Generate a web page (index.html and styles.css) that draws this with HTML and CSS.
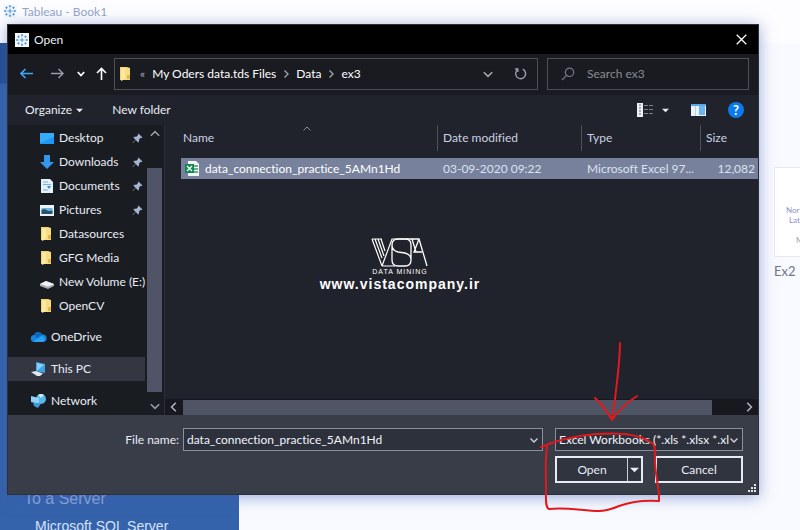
FILE: index.html
```
<!DOCTYPE html>
<html lang="en">
<head>
<meta charset="UTF-8">
<meta name="viewport" content="width=device-width, initial-scale=1">
<title>Tableau - Book1</title>
<link rel="stylesheet" href="styles.css">
</head>

<body>

<svg class="defs" aria-hidden="true">
  <symbol id="tableau" viewBox="0 0 14 14">
    <rect width="14" height="14" fill="#f4f9ff"/>
    <path d="M7 4.500v5M4.500 7h5M7 1v2.500M5.800 2.200h2.400M7 10.500V13M5.800 11.800h2.400M1 7h2.500M2.200 5.800v2.400M10.500 7H13M11.800 5.800v2.400M3.500 2.500v2.400M2.300 3.700h2.400M10.500 2.500v2.400M9.300 3.700h2.400M3.500 9.200v2.400M2.300 10.400h2.400M10.500 9.200v2.400M9.300 10.400h2.400" stroke="#4a90cf" stroke-width="0.9" fill="none"/>
  </symbol>
  <symbol id="folder" viewBox="0 0 14 16">
    <path d="M1 1h7l3 1v12H1z" fill="#f5d573"/>
    <path d="M2 3l4-1v11l-4 2z" fill="#ffe9a0"/>
    <path d="M6 2h5v12H6z" fill="#f8dc82"/>
    <path d="M8 9h3v4H8z" fill="#e3b94f"/>
  </symbol>
  <symbol id="pin" viewBox="0 0 12 12">
    <path d="M7 .5L11.500 5l-1.300.5-.6-.2-2 2 .1 2-1 1-2.600-2.600L1 11l-.4-.4 3.200-3.200L1.500 5l1-1 2.200.2 2-2L6.400 1.500z" fill="#a3b4d3"/>
  </symbol>
  <symbol id="down" viewBox="0 0 10 10">
    <path d="M1.500 3.500L5 7l3.500-3.500" fill="none" stroke="currentColor" stroke-width="1.300"/>
  </symbol>
  <symbol id="right" viewBox="0 0 10 10">
    <path d="M3.500 1.500L7 5 3.500 8.500" fill="none" stroke="currentColor" stroke-width="1.300"/>
  </symbol>
  <symbol id="caret" viewBox="0 0 8 5">
    <path d="M0 .5h8L4 4.500z" fill="currentColor"/>
  </symbol>
</svg>

<!-- application behind the dialog -->
<div class="app">
  <header class="app-title">
    <svg class="app-icon"><use href="#tableau"/></svg>
    <span>Tableau - Book1</span>
  </header>
  <div class="app-body">
    <aside class="connect">
      <h2>To a Server</h2>
      <a href="#">Microsoft SQL Server</a>
    </aside>
    <main class="recent">
      <figure class="book">
        <div class="thumb">
          <p>Nor</p>
          <p class="thumb-lat">Lat</p>
          <p class="thumb-m">M</p>
        </div>
        <figcaption>Ex2</figcaption>
      </figure>
    </main>
  </div>
</div>

<div class="dialog" role="dialog" aria-label="Open">

  <div class="titlebar">
    <svg class="app-icon"><use href="#tableau"/></svg>
    <span>Open</span>
    <button class="close" aria-label="Close">
      <svg width="11" height="11" viewBox="0 0 11 11"><path d="M.7.700l9.600 9.600M10.300.700L.7 10.300" stroke="#fff" stroke-width="1.300"/></svg>
    </button>
  </div>

  <div class="navbar">
    <div class="nav-buttons">
      <button class="back" aria-label="Back"><svg width="13" height="11" viewBox="0 0 13 11"><path d="M13 5.500H1M5.500 1L1 5.500 5.500 10" fill="none" stroke="#42a5f5" stroke-width="1.600"/></svg></button>
      <button class="forward" aria-label="Forward"><svg width="13" height="11" viewBox="0 0 13 11"><path d="M0 5.500h12M7.500 1L12 5.500 7.500 10" fill="none" stroke="#9a9da5" stroke-width="1.400"/></svg></button>
      <button class="history" aria-label="Recent locations"><svg width="8" height="6" viewBox="0 0 8 6"><path d="M.8 1L4 4.500 7.200 1" fill="none" stroke="#fff" stroke-width="1.700"/></svg></button>
      <button aria-label="Up"><svg width="11" height="13" viewBox="0 0 11 13"><path d="M5.500 13V1.500M1 6l4.500-4.500L10 6" fill="none" stroke="#fff" stroke-width="1.600"/></svg></button>
    </div>
    <div class="address">
      <svg class="folder"><use href="#folder"/></svg>
      <span class="more">«</span>
      <a href="#">My Oders data.tds Files</a>
      <svg class="sep"><use href="#right"/></svg>
      <a href="#">Data</a>
      <svg class="sep"><use href="#right"/></svg>
      <a href="#">ex3</a>
      <button class="drop" aria-label="Previous locations"><svg width="12" height="12"><use href="#down"/></svg></button>
      <button class="refresh" aria-label="Refresh"><svg width="13" height="13" viewBox="0 0 13 13"><path d="M8.800 2.200a5 5 0 1 1-4.900.3M3.800 5V2H1" fill="none" stroke="#9b9ea6" stroke-width="1.400"/></svg></button>
    </div>
    <label class="search">
      <svg width="14" height="14" viewBox="0 0 14 14"><circle cx="8.500" cy="5.300" r="4.200" fill="none" stroke="#777a83" stroke-width="1.200"/><path d="M5.500 8.300L1 13" stroke="#777a83" stroke-width="1.200"/></svg>
      <input type="search" placeholder="Search ex3" aria-label="Search ex3">
    </label>
  </div>

  <div class="toolbar">
    <button class="organize">Organize <svg width="7" height="5"><use href="#caret"/></svg></button>
    <button>New folder</button>
    <div class="tools">
      <button aria-label="View">
        <svg width="16" height="14" viewBox="0 0 16 14"><path d="M0 0h6v14H0z" fill="#eef1f6"/><path d="M2 2h2M2 5h2M2 8h2M2 11h2" stroke="#5a6270"/><path d="M7 2.500h4M12 2.500h4M7 6.500h4M12 6.500h4M7 10.500h4M12 10.500h4" stroke="#7c818b"/></svg>
      </button>
      <button aria-label="More views"><svg width="7" height="5"><use href="#caret"/></svg></button>
      <button class="preview" aria-label="Preview pane">
        <svg width="15" height="12" viewBox="0 0 15 12"><path d="M0 0h15v12H0z" fill="#e9f3fc"/><path d="M8 2h6v9H8z" fill="#6bb4f1"/><path d="M0 0h15v2H0z" fill="#58a8e8"/><path d="M4.500 2v10" stroke="#b9cfe3"/></svg>
      </button>
      <button class="help" aria-label="Help">?</button>
    </div>
  </div>

  <div class="content">
    <nav class="tree">
      <ul class="places">
        <li><a href="#"><svg width="14" height="11" viewBox="0 0 14 11"><path d="M0 0h14v11H0z" fill="#2196f3"/><path d="M0 0h14v4L0 10z" fill="#35adfb"/></svg>Desktop<svg class="pin"><use href="#pin"/></svg></a></li>
        <li><a href="#"><svg width="14" height="14" viewBox="0 0 14 14"><path d="M4 0h6v7h4l-7 7-7-7h4z" fill="#3397ee"/></svg>Downloads<svg class="pin"><use href="#pin"/></svg></a></li>
        <li><a href="#"><svg width="14" height="14" viewBox="0 0 14 14"><path d="M1 0h9l3 3v11H1z" fill="#e4f1fb"/><path d="M3 3h5M3 5.500h8M3 11h5" stroke="#74b4e4"/><path d="M7 7l4 0-2 3z" fill="#3c86c4"/></svg>Documents<svg class="pin"><use href="#pin"/></svg></a></li>
        <li><a href="#"><svg width="14" height="11" viewBox="0 0 14 11"><path d="M0 0h14v11H0z" fill="#eaf4fb"/><path d="M1.500 3h11v5h-11z" fill="#70b7e0"/><path d="M1.500 5l3-1 4 2 4-.5V9h-11z" fill="#2b526e"/></svg>Pictures<svg class="pin"><use href="#pin"/></svg></a></li>
        <li><a href="#"><svg width="14" height="16"><use href="#folder"/></svg>Datasources</a></li>
        <li><a href="#"><svg width="14" height="16"><use href="#folder"/></svg>GFG Media</a></li>
        <li><a href="#"><svg width="14" height="14" viewBox="0 0 14 14"><path d="M0 9l6-3 8 3v2l-6 3-8-3z" fill="#a9abb1"/><path d="M0 9l6-3 8 3-6 2.500z" fill="#f3f3f6"/></svg>New Volume (E:)</a></li>
        <li><a href="#"><svg width="14" height="16"><use href="#folder"/></svg>OpenCV</a></li>
      </ul>
      <ul class="places roots">
        <li><a href="#"><svg width="16" height="12" viewBox="0 0 16 12"><path d="M3.500 11a3.500 3.500 0 0 1-.5-7 4.500 4.500 0 0 1 8.300-.5A3.800 3.800 0 0 1 12.500 11z" fill="#1683dc"/><path d="M3 4a4.500 4.500 0 0 1 8.300-.5L6 7z" fill="#0f66bd"/><path d="M2 10.500L11 5a3.500 3.500 0 0 1 1.500 6h-9z" fill="#2ba2f2"/></svg>OneDrive</a></li>
        <li class="current"><a href="#"><svg width="16" height="14" viewBox="0 0 16 14"><path d="M5 0l9 2v9l-9-2z" fill="#3fa5e8"/><path d="M6 1l7 1.800-7 6z" fill="#86d0fa"/><path d="M0 10l5-1 7 2.500-3 2.500H6z" fill="#dfe8f0"/></svg>This PC</a></li>
        <li><a href="#"><svg width="16" height="14" viewBox="0 0 16 14"><circle cx="10" cy="5" r="5" fill="#58b6ec"/><path d="M7 1a5 5 0 0 1 6 0l-3 3z" fill="#cbeafd"/><path d="M0 2l8 2v6l-8-2z" fill="#8fd3f8"/><path d="M2 8.500l8 1-3 4.500-4-2z" fill="#3c9bdd"/></svg>Network</a></li>
      </ul>
      <div class="vscroll">
        <svg class="flip"><use href="#down"/></svg>
        <div class="vthumb"></div>
        <svg><use href="#down"/></svg>
      </div>
    </nav>

    <section class="files">
      <svg class="sort" viewBox="0 0 8 5"><path d="M.5 4.500L4 1l3.500 3.500" fill="none" stroke="#8b8f98"/></svg>
      <table>
        <thead>
          <tr><th class="name"><span>Name</span></th><th class="date"><span>Date modified</span></th><th class="type"><span>Type</span></th><th class="size"><span>Size</span></th></tr>
        </thead>
        <tbody>
          <tr>
            <td><div class="file"><svg width="14" height="15" viewBox="0 0 14 15"><path d="M3 0h8l3 3v12H3z" fill="#eff7f2"/><path d="M8 5h5M8 8h5M8 11h5" stroke="#40996b" stroke-width="1.500"/><path d="M0 3h9v9H0z" fill="#168653"/><path d="M2 5l5 5M7 5l-5 5" stroke="#e9fff3" stroke-width="1.400"/></svg>data_connection_practice_5AMn1Hd</div></td>
            <td>03-09-2020 09:22</td>
            <td>Microsoft Excel 97...</td>
            <td class="num">12,082</td>
          </tr>
        </tbody>
      </table>
      <div class="hscroll">
        <svg class="flip"><use href="#right"/></svg>
        <div class="hthumb"></div>
        <svg><use href="#right"/></svg>
      </div>
    </section>
  </div>

  <form class="footer">
    <label for="filename">File name:</label>
    <div class="field">
      <input id="filename" type="text" value="data_connection_practice_5AMn1Hd">
      <svg><use href="#down"/></svg>
    </div>
    <div class="field filter">
      <select aria-label="File type">
        <option>Excel Workbooks (*.xls *.xlsx *.xl</option>
      </select>
      <svg><use href="#down"/></svg>
    </div>
    <div class="actions">
      <div class="split">
        <button type="button">Open</button>
        <button type="button" class="split-arrow" aria-label="Open options"><svg width="9" height="6"><use href="#caret"/></svg></button>
      </div>
      <button type="button" class="cancel">Cancel</button>
    </div>
  </form>

  <svg class="grip" viewBox="0 0 9 9"><path d="M6 0h2v2H6zM3 3h2v2H3zM6 3h2v2H6zM0 6h2v2H0zM3 6h2v2H3zM6 6h2v2H6z" fill="#e3e6ec"/></svg>
</div>

<div class="watermark">
  <svg width="58" height="30" viewBox="0 0 58 30" fill="none" stroke="#fff">
    <path d="M1 1l10 27M4 1l7 19M7 1l6 17M10 1l4 12M1 1h10M11 28h13M11 28L21 1h14" stroke-width="1.200"/>
    <path d="M40 7c0-4-2-6-6-6h-7c-4 0-6 2-6 6s2 6 6 7l7 1c4 1 6 3 6 7s-2 6-6 6h-7c-4 0-6-2-6-6V7M40 7v15" stroke-width="1.300"/>
    <path d="M35 1h13l8 27M41 1l4 13M48 1l-5 13h8" stroke-width="1.300"/>
  </svg>
  <span class="tagline">DATA MINING</span>
  <span class="site">www.vistacompany.ir</span>
</div>

<!-- hand-drawn arrow and box round the Open button -->
<svg class="marks" viewBox="0 0 124 176" fill="none" stroke="#e0191d" stroke-width="2" stroke-linecap="round" stroke-linejoin="round">
  <path d="M80 3c0 17-3 39-5 56-1 8-3 14-3 21M55 58c6 6 12 13 17 22 6-9 14-17 25-24"/>
  <path d="M1 107c14-6 33-11 56-13 25-2 44 1 55 9 4 3 3 10 3 17 0 12 3 24 4 34v7c-13-1-26 0-40 5-7 3-13 5-20 5-15 0-32-4-50-2-4-1-3-12-3-22 0-15-1-27 1-40"/>
</svg>

</body>
</html>
```
FILE: styles.css
```
*{
  box-sizing:border-box;
}

body{
  margin:0;
  font-family:Lato,"Open Sans",sans-serif;
  font-size:12px;
  line-height:16px;
  font-variant-ligatures:none;
  color:#e9ecf5;
  overflow:hidden;
}

button,input,select{
  font:inherit;
  font-variant-ligatures:none;
  color:inherit;
  background:none;
  border:none;
  padding:0;
  margin:0;
  outline:none;
}

a{
  color:inherit;
  text-decoration:none;
}

svg{
  display:block;
  flex:none;
}

.defs{
  display:none;
}

.app{
  height:100vh;
  display:flex;
  flex-direction:column;
  background:#f9faff;
}

.app-title{
  display:flex;
  align-items:flex-start;
  gap:5px;
  height:43px;
  padding:4px 3px 0;
  background:#fdfdff;
  color:#94a3cc;
}

.app-icon{
  width:14px;
  height:14px;
}

.app-body{
  flex:1;
  display:flex;
  min-height:0;
}

.connect{
  width:239px;
  padding-left:24px;
  display:flex;
  flex-direction:column;
  justify-content:flex-end;
  background:linear-gradient(#264f91 0,#264f91 40px,#3563ab 41px);
  font-family:"Liberation Sans",sans-serif;
}

.connect h2{
  margin:0 0 8px;
  font-size:16px;
  line-height:20px;
  font-weight:400;
  color:#8fa9d8;
}

.connect a{
  padding-left:11px;
  height:13px;
  font-size:14px;
  line-height:18px;
  color:#d5e2fa;
}

.recent{
  flex:1;
  display:flex;
  justify-content:flex-end;
  padding-top:124px;
  overflow:hidden;
}

.book{
  width:26px;
  margin:0;
  color:#70758a;
}

.thumb{
  height:90px;
  padding:37px 0 0 11px;
  border:1px solid #e9eaf3;
  border-right:none;
  background:#fff;
  font-size:8px;
  line-height:10px;
  color:#8d8fc9;
}

.thumb p{
  margin:0;
}

.thumb .thumb-lat{
  padding-left:3px;
}

.thumb .thumb-m{
  padding:10px 0 0 10px;
  color:#9a9da8;
  overflow:hidden;
}

.book figcaption{
  padding-top:6px;
  font-size:13px;
}

/* dialog window */
.dialog{
  position:absolute;
  inset:24px 41px 35px 7px;
  display:flex;
  flex-direction:column;
  background:#20232b;
  border:1px solid #2c3038;
  box-shadow:0 2px 14px rgba(60,90,180,0.5);
}

.titlebar{
  height:29px;
  display:flex;
  align-items:center;
  gap:5px;
  padding:0 11px 0 7px;
  background:#000;
}

.close{
  margin-left:auto;
}

.navbar{
  height:41px;
  display:flex;
  align-items:center;
  padding:0 9px 2px 12px;
  background:#191b21;
}

.nav-buttons{
  display:flex;
  align-items:center;
  width:94px;
}

.nav-buttons .back{
  width:31px;
}

.nav-buttons .forward{
  width:26px;
}

.nav-buttons .history{
  width:19px;
}

.address,.search{
  display:flex;
  align-items:center;
  height:32px;
  border:1px solid #4c4f58;
}

.address{
  flex:1;
  padding:0 10px 0 4px;
  color:#fff;
}

.folder{
  width:14px;
  height:16px;
}

.more{
  padding:0 7px;
  color:#a5a8b0;
}

.sep{
  width:10px;
  height:10px;
  margin:0 5px;
  color:#a5a8b0;
}

.drop{
  margin-left:auto;
  color:#a5a8b0;
}

.refresh{
  margin-left:20px;
}

.search{
  width:202px;
  margin-left:9px;
  padding:0 13px;
  gap:12px;
}

.search input{
  flex:1;
  min-width:0;
}

.search input::placeholder{
  color:#888b94;
}

.toolbar{
  height:30px;
  display:flex;
  align-items:center;
  gap:29px;
  padding:0 14px 0 17px;
}

.organize{
  display:flex;
  align-items:center;
  gap:4px;
}

.tools{
  margin-left:auto;
  display:flex;
  align-items:center;
  gap:9px;
}

.preview{
  margin-left:13px;
}

.help{
  width:16px;
  height:16px;
  margin-left:13px;
  border-radius:50%;
  background:#0b79f0;
  color:#fff;
  font-size:13px;
  font-weight:700;
}

.content{
  flex:1;
  min-height:0;
  display:flex;
}

.tree{
  width:157px;
  display:grid;
  grid-template-columns:1fr 19px;
  grid-template-rows:auto 1fr;
  background:#191c21;
  border-right:1px solid #2b2e36;
}

.places{
  margin:0;
  padding:1px 0 0;
  list-style:none;
}

.places a{
  display:flex;
  align-items:center;
  gap:5px;
  height:24px;
  padding-left:32px;
  white-space:nowrap;
}

.roots{
  display:flex;
  flex-direction:column;
  gap:8px;
  padding-top:7px;
}

.roots a{
  padding-left:23px;
  gap:4px;
}

.current a{
  background:#343741;
}

.pin{
  width:11px;
  height:11px;
  margin:0 2px 0 auto;
}

.vscroll{
  grid-column:2;
  grid-row:1 / 3;
  display:flex;
  flex-direction:column;
  align-items:center;
  padding:3px 0;
  color:#9a9da5;
}

.vscroll svg,.hscroll svg{
  width:12px;
  height:12px;
}

.vthumb{
  flex:1;
  width:15px;
  margin:28px 0 8px;
  background:#505467;
}

.flip{
  transform:rotate(180deg);
}

.files{
  flex:1;
  min-width:0;
  display:flex;
  flex-direction:column;
  position:relative;
}

.sort{
  position:absolute;
  left:138px;
  top:1px;
  width:8px;
  height:5px;
}

table{
  width:calc(100% - 16px);
  margin-left:16px;
  table-layout:fixed;
  border-collapse:collapse;
}

th{
  padding:0 0 7px;
  font-weight:400;
  text-align:left;
  color:#cbd1e2;
}

th span{
  display:block;
  padding-left:5px;
  border-left:1px solid #4d5059;
  line-height:26px;
}

.name span{
  padding-left:2px;
  border-left:none;
}

.date{
  width:144px;
}

.type{
  width:119px;
}

.size{
  width:58px;
}

td{
  height:21px;
  padding:0 0 0 6px;
  white-space:nowrap;
  background:#77819b;
  color:#dbe2f3;
}

td:first-child{
  padding-left:4px;
  color:#fff;
}

.num{
  padding:0 3px 0 0;
  text-align:right;
}

.file{
  display:flex;
  align-items:center;
  gap:6px;
}

.hscroll{
  display:flex;
  align-items:center;
  height:16px;
  margin-top:auto;
  padding:0 3px;
  background:#17191e;
  color:#b0b3bb;
}

.hthumb{
  flex:1;
  height:15px;
  margin:0 31px 0 3px;
  background:#505566;
}

.footer{
  height:79px;
  display:grid;
  grid-template-columns:171px 1fr 188px;
  grid-template-rows:23px 27px;
  column-gap:12px;
  row-gap:5px;
  padding:13px 15px 0 0;
  background:#383d48;
}

.footer label{
  text-align:right;
  line-height:23px;
}

.footer .field:not(.filter){
  margin-left:-8px;
}

.field{
  display:flex;
  align-items:center;
  padding:0 3px;
  border:1px solid #8a909d;
  background:#2c313b;
  color:#d0d5df;
}

.field svg{
  width:10px;
  height:10px;
}

.field input,.field select{
  flex:1;
  min-width:0;
  color:#f1f4fb;
}

.field select{
  appearance:none;
  height:21px;
}

.actions{
  grid-column:3;
  display:grid;
  grid-template-columns:1fr 1fr;
  gap:12px;
}

.split,.cancel{
  border:2px solid #e6eaf2;
  background:#2f343e;
}

.split{
  display:flex;
}

.split button{
  flex:1;
}

.split .split-arrow{
  flex:none;
  width:14px;
  padding-left:2px;
  border-left:1px solid #c8ccd5;
}

.grip{
  position:absolute;
  right:1px;
  bottom:1px;
  width:9px;
  height:9px;
}

/* overlays */
.watermark{
  position:absolute;
  left:0;
  right:0;
  top:238px;
  display:flex;
  flex-direction:column;
  align-items:center;
  font-family:"Liberation Sans",sans-serif;
  color:#fff;
  pointer-events:none;
}

.tagline{
  font-size:7px;
  line-height:8px;
  letter-spacing:1px;
}

.site{
  font-size:14px;
  line-height:16px;
  font-weight:700;
  letter-spacing:1px;
}

.marks{
  position:absolute;
  right:136px;
  bottom:14px;
  width:124px;
  height:176px;
  pointer-events:none;
}
```
